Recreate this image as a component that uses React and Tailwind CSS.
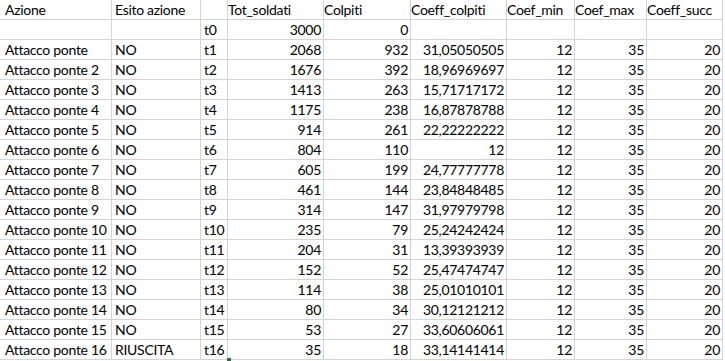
import React from 'react';

const cols = [
  { w: 'w-[112px]', pad: 'pl-[5px]' },
  { w: 'w-[89px]', pad: 'pl-[3px]' },
  { w: 'w-[27px]', pad: 'pl-[3px]' },
  { w: 'w-[96px]', pad: 'pr-[2px]' },
  { w: 'w-[87px]', pad: 'pr-[2px]' },
  { w: 'w-[96px]', pad: 'pr-[2px]' },
  { w: 'w-[68px]', pad: 'pr-[2px]' },
  { w: 'w-[72px]', pad: 'pr-[2px]' },
  { w: 'w-[76px]', pad: 'pr-[2px]' },
];

const header = ['Azione', 'Esito azione', '', 'Tot_soldati', 'Colpiti', 'Coeff_colpiti', 'Coef_min', 'Coef_max', 'Coeff_succ'];

const data = [
  ['', '', 't0', '3000', '0', '', '', '', ''],
  ['Attacco ponte', 'NO', 't1', '2068', '932', '31,05050505', '12', '35', '20'],
  ['Attacco ponte 2', 'NO', 't2', '1676', '392', '18,96969697', '12', '35', '20'],
  ['Attacco ponte 3', 'NO', 't3', '1413', '263', '15,71717172', '12', '35', '20'],
  ['Attacco ponte 4', 'NO', 't4', '1175', '238', '16,87878788', '12', '35', '20'],
  ['Attacco ponte 5', 'NO', 't5', '914', '261', '22,22222222', '12', '35', '20'],
  ['Attacco ponte 6', 'NO', 't6', '804', '110', '12', '12', '35', '20'],
  ['Attacco ponte 7', 'NO', 't7', '605', '199', '24,77777778', '12', '35', '20'],
  ['Attacco ponte 8', 'NO', 't8', '461', '144', '23,84848485', '12', '35', '20'],
  ['Attacco ponte 9', 'NO', 't9', '314', '147', '31,97979798', '12', '35', '20'],
  ['Attacco ponte 10', 'NO', 't10', '235', '79', '25,24242424', '12', '35', '20'],
  ['Attacco ponte 11', 'NO', 't11', '204', '31', '13,39393939', '12', '35', '20'],
  ['Attacco ponte 12', 'NO', 't12', '152', '52', '25,47474747', '12', '35', '20'],
  ['Attacco ponte 13', 'NO', 't13', '114', '38', '25,01010101', '12', '35', '20'],
  ['Attacco ponte 14', 'NO', 't14', '80', '34', '30,12121212', '12', '35', '20'],
  ['Attacco ponte 15', 'NO', 't15', '53', '27', '33,60606061', '12', '35', '20'],
  ['Attacco ponte 16', 'RIUSCITA', 't16', '35', '18', '33,14141414', '12', '35', '20'],
];

function Row({ cells, head }) {
  return (
    <div className="flex h-[20px]">
      {cells.map((c, i) => {
        const right = !head && i >= 3;
        return (
          <div
            key={i}
            className={`${cols[i].w} ${cols[i].pad} shrink-0 h-[20px] border-r border-b border-[#d4d4d4] flex items-center pt-[1px] whitespace-nowrap ${right ? 'justify-end' : 'justify-start'}`}
          >
            {c}
          </div>
        );
      })}
    </div>
  );
}

export default function App() {
  return (
    <div
      className="relative w-[725px] h-[361px] bg-white text-black text-[14px] tracking-[-0.3px] leading-none overflow-hidden"
      style={{ fontFamily: 'Lato, "Liberation Sans", sans-serif' }}
    >
      <Row cells={header} head />
      {data.map((r, i) => (
        <Row key={i} cells={r} />
      ))}
      <div className="absolute left-[227px] top-[358px] w-[4px] h-[3px] bg-[#217346]" />
    </div>
  );
}
